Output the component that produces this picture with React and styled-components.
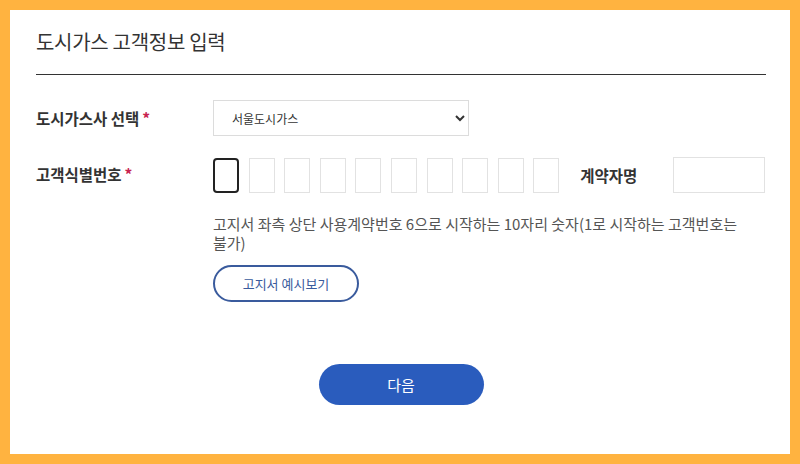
import React from 'react';
import styled, { createGlobalStyle } from 'styled-components';

const GlobalStyle = createGlobalStyle`
  html, body {
    margin: 0;
    padding: 0;
    background: #ffb340;
  }
  body {
    font-family: 'Noto Sans CJK KR', 'Noto Sans', sans-serif;
  }
`;

const Frame = styled.div`
  padding: 10px;
  height: 464px;
  box-sizing: border-box;
`;

const Panel = styled.div`
  background: #fff;
  height: 100%;
  padding: 0 24px 0 26px;
  box-sizing: border-box;
  display: flex;
  flex-direction: column;
`;

const Title = styled.h1`
  margin: 0;
  padding: 17px 0 0;
  height: 47px;
  font-size: 20px;
  font-weight: 400;
  color: #333;
  letter-spacing: -0.3px;
  border-bottom: 1px solid #333;
`;

const Form = styled.div`
  display: flex;
  flex-direction: column;
  gap: 21px;
  padding-top: 25px;
`;

const Row = styled.div`
  display: flex;
  align-items: ${(p) => (p.top ? 'flex-start' : 'center')};
`;

const Label = styled.div`
  width: 177px;
  flex-shrink: 0;
  font-size: 15.5px;
  font-weight: 700;
  color: #333;
  line-height: 35px;
`;

const Required = styled.span`
  color: #c8234f;
  margin-left: 3px;
`;

const Select = styled.select`
  width: 256px;
  height: 36px;
  border: 1px solid #dcdcdc;
  border-radius: 0;
  background: #fff;
  padding: 0 10px 0 14px;
  font-family: inherit;
  font-size: 12px;
  color: #333;
  outline: none;
`;

const Field = styled.div`
  display: flex;
  flex-direction: column;
`;

const Digits = styled.div`
  display: flex;
  align-items: center;
`;

const DigitGroup = styled.div`
  display: flex;
  gap: 9.6px;
`;

const Digit = styled.div`
  width: 26px;
  height: 35px;
  box-sizing: border-box;
  border: ${(p) => (p.active ? '2px solid #222' : '1px solid #e2e2e2')};
  border-radius: ${(p) => (p.active ? '4px' : '0')};
`;

const NameLabel = styled.div`
  margin-left: 21px;
  width: 93px;
  font-size: 15.5px;
  font-weight: 700;
  color: #333;
`;

const NameInput = styled.div`
  width: 92px;
  height: 36px;
  box-sizing: border-box;
  border: 1px solid #e2e2e2;
`;

const Help = styled.p`
  margin: 21px 0 0;
  width: 545px;
  font-size: 15px;
  line-height: 19px;
  color: #555;
  word-break: keep-all;
`;

const OutlineButton = styled.button`
  margin-top: 13px;
  width: 146px;
  height: 37px;
  border: 2px solid #3a5b9d;
  border-radius: 19px;
  background: #fff;
  color: #3a5b9d;
  font-family: inherit;
  font-size: 13px;
`;

const Footer = styled.div`
  display: flex;
  justify-content: center;
  padding-top: 62px;
`;

const PrimaryButton = styled.button`
  width: 165px;
  height: 41px;
  border: none;
  border-radius: 21px;
  background: #2a5cbd;
  color: #fff;
  font-family: inherit;
  font-size: 15px;
`;

const App = () => {
  const digits = Array.from({ length: 10 }, (_, i) => i);

  return (
    <>
      <GlobalStyle />
      <Frame>
        <Panel>
          <Title>도시가스 고객정보 입력</Title>
          <Form>
            <Row>
              <Label>
                도시가스사 선택<Required>*</Required>
              </Label>
              <Select defaultValue="seoul">
                <option value="seoul">서울도시가스</option>
              </Select>
            </Row>
            <Row top>
              <Label>
                고객식별번호<Required>*</Required>
              </Label>
              <Field>
                <Digits>
                  <DigitGroup>
                    {digits.map((d) => (
                      <Digit key={d} active={d === 0} />
                    ))}
                  </DigitGroup>
                  <NameLabel>계약자명</NameLabel>
                  <NameInput />
                </Digits>
                <Help>
                  고지서 좌측 상단 사용계약번호 6으로 시작하는 10자리 숫자(1로 시작하는 고객번호는 불가)
                </Help>
                <div>
                  <OutlineButton>고지서 예시보기</OutlineButton>
                </div>
              </Field>
            </Row>
          </Form>
          <Footer>
            <PrimaryButton>다음</PrimaryButton>
          </Footer>
        </Panel>
      </Frame>
    </>
  );
};

export default App;
